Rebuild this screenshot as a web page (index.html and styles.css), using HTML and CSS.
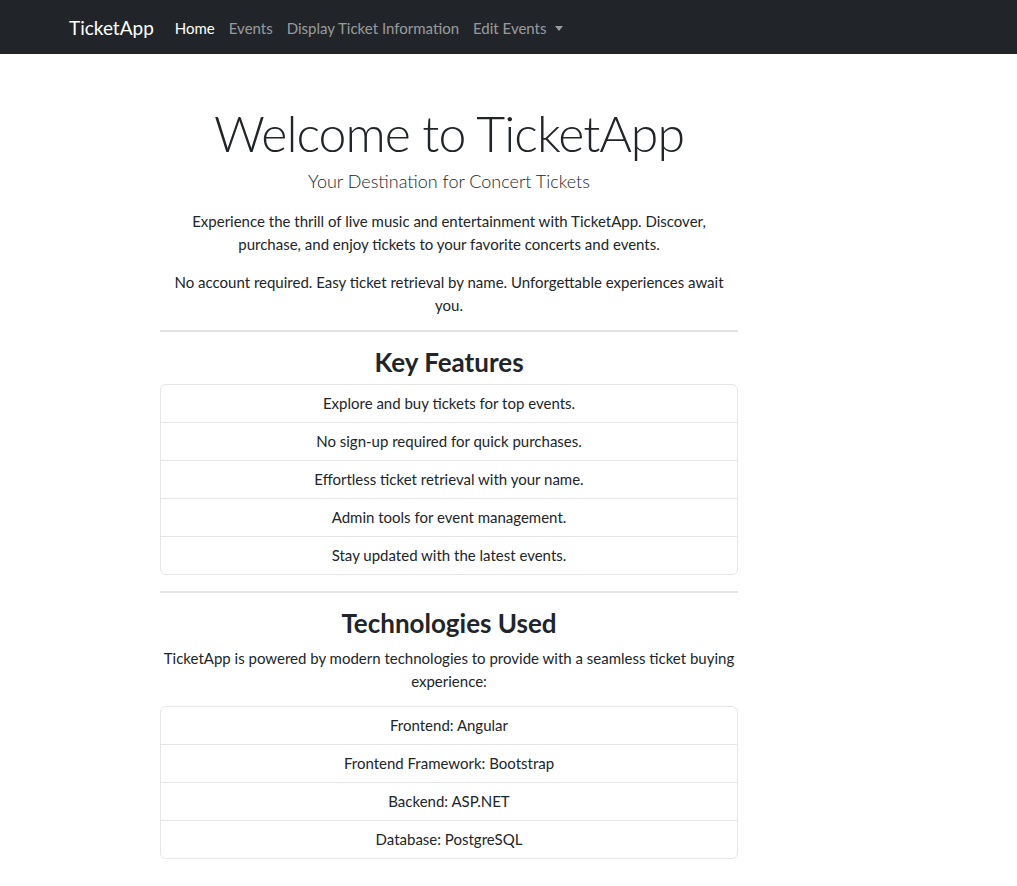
FILE: index.html
```html
<!DOCTYPE html>
<html lang="en">
<head>
<meta charset="utf-8">
<title>TicketApp</title>
<link rel="stylesheet" href="styles.css">
</head>
<body>
<nav class="navbar">
  <a class="brand" href="#">TicketApp</a>
  <ul class="nav">
    <li><a class="nav-link active" href="#">Home</a></li>
    <li><a class="nav-link" href="#">Events</a></li>
    <li><a class="nav-link" href="#">Display Ticket Information</a></li>
    <li><a class="nav-link dropdown" href="#">Edit Events<span class="caret"></span></a></li>
  </ul>
</nav>
<main class="main">
  <header class="intro">
    <h1 class="display">Welcome to TicketApp</h1>
    <p class="lead">Your Destination for Concert Tickets</p>
    <p class="text">Experience the thrill of live music and entertainment with TicketApp. Discover, purchase, and enjoy tickets to your favorite concerts and events.</p>
    <p class="text">No account required. Easy ticket retrieval by name. Unforgettable experiences await you.</p>
  </header>
  <hr class="divider">
  <h2 class="section-title">Key Features</h2>
  <ul class="list-group">
    <li class="list-item">Explore and buy tickets for top events.</li>
    <li class="list-item">No sign-up required for quick purchases.</li>
    <li class="list-item">Effortless ticket retrieval with your name.</li>
    <li class="list-item">Admin tools for event management.</li>
    <li class="list-item">Stay updated with the latest events.</li>
  </ul>
  <hr class="divider">
  <h2 class="section-title tight">Technologies Used</h2>
  <p class="text tech">TicketApp is powered by modern technologies to provide with a seamless ticket buying experience:</p>
  <ul class="list-group">
    <li class="list-item">Frontend: Angular</li>
    <li class="list-item">Frontend Framework: Bootstrap</li>
    <li class="list-item">Backend: ASP.NET</li>
    <li class="list-item">Database: PostgreSQL</li>
  </ul>
</main>
</body>
</html>
```
FILE: styles.css
```css
* { box-sizing: border-box; }
html, body { margin: 0; padding: 0; }
body {
  font-family: "Segoe UI", Lato, "Liberation Sans", sans-serif;
  font-size: 15px;
  line-height: 23px;
  color: #212529;
  background: #fff;
}
.navbar {
  display: flex;
  align-items: center;
  height: 54px;
  background: #212529;
  padding: 1px 0 0 69px;
}
.brand {
  color: #fff;
  text-decoration: none;
  font-size: 19px;
  margin-right: 21px;
  line-height: 30px;
}
.nav {
  display: flex;
  list-style: none;
  margin: 0;
  padding: 0;
}
.nav-link {
  display: block;
  padding: 8px 7px;
  color: rgba(255,255,255,.55);
  text-decoration: none;
  font-size: 15px;
  line-height: 24px;
}
.nav li:first-child .nav-link { padding-left: 0; }
.nav-link.active { color: #fff; }
.caret {
  display: inline-block;
  margin-left: 8px;
  vertical-align: 3px;
  border-top: 5px solid rgba(255,255,255,.55);
  border-left: 4.5px solid transparent;
  border-right: 4.5px solid transparent;
}
.main {
  width: 578px;
  margin-left: 160px;
  padding-top: 49px;
  text-align: center;
}
.intro .text:last-child { margin-bottom: 0; }
.display {
  font-size: 50px;
  font-weight: 300;
  letter-spacing: -1px;
  line-height: 60px;
  margin: 0 0 4.5px;
}
.lead {
  font-size: 18px;
  font-weight: 300;
  line-height: 27px;
  margin: 0 0 15px;
}
.text { margin: 0 0 15px; }
.text.tech { margin-bottom: 12.5px; }
.divider {
  border: 0;
  border-top: 2px solid #e3e3e3;
  margin: 13px 0 15px;
}
.section-title {
  font-size: 26px;
  font-weight: 700;
  line-height: 31px;
  margin: 0 0 6px;
}
.section-title.tight { margin-bottom: 8.5px; }
.list-group {
  list-style: none;
  margin: 0 0 16px;
  padding: 0;
  border: 1px solid #e6e6e6;
  border-radius: 6px;
}
.list-item {
  padding: 7px 16px;
  border-top: 1px solid #e6e6e6;
}
.list-item:first-child { border-top: 0; }
```
